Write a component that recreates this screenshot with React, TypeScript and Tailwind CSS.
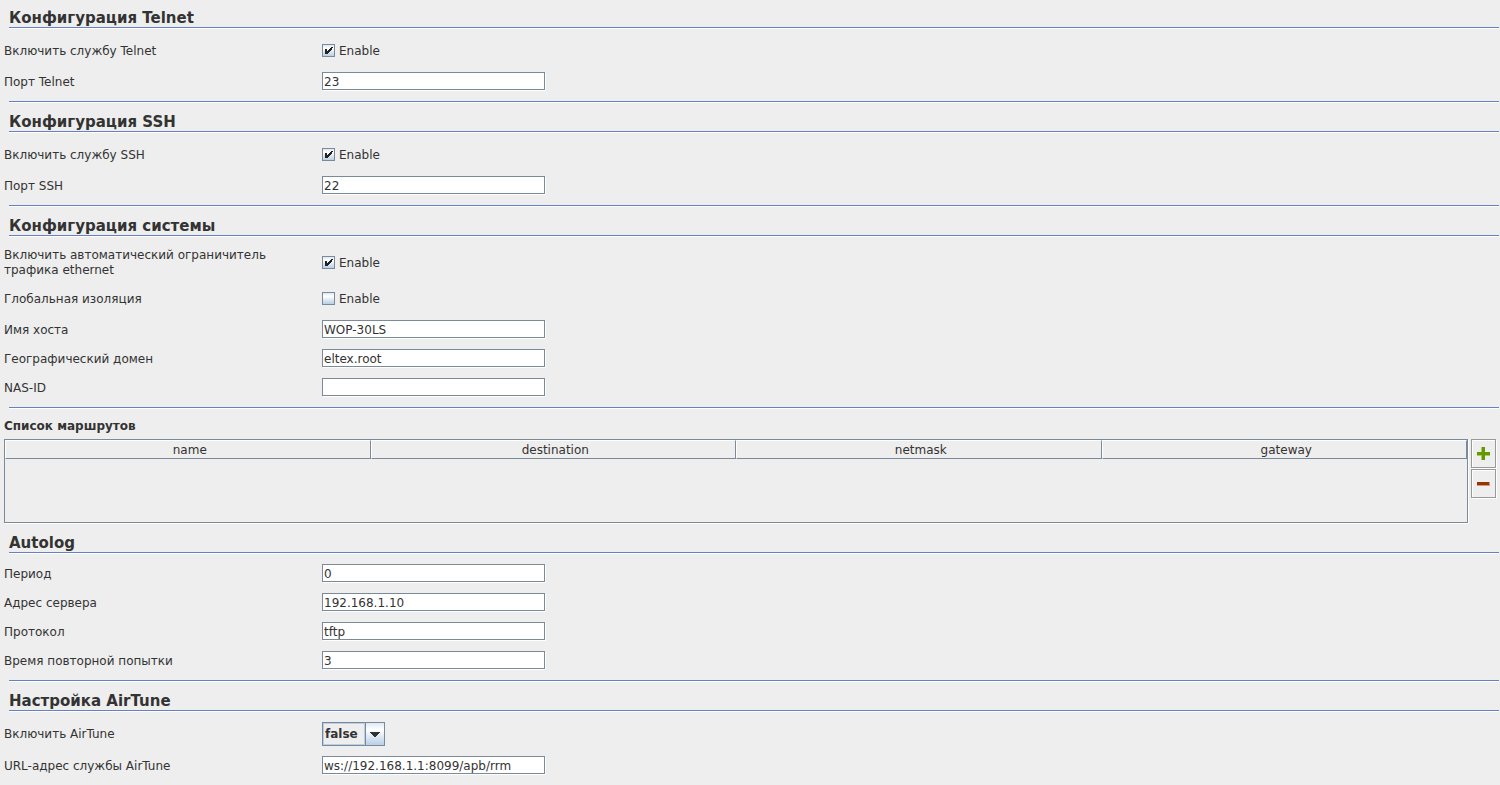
import { useId, useState, type ReactNode } from 'react'

const COLUMNS = ['name', 'destination', 'netmask', 'gateway']

export default function App() {
  return (
    <main className="min-h-screen bg-[#eeeeee] pr-px font-['DejaVu_Sans',sans-serif] text-xs leading-[15px] text-[#333333]">
      <Section title="Конфигурация Telnet">
        <CheckRow label="Включить службу Telnet" checked />
        <TextRow label="Порт Telnet" value="23" />
      </Section>
      <Separator />

      <Section title="Конфигурация SSH">
        <CheckRow label="Включить службу SSH" checked />
        <TextRow label="Порт SSH" value="22" />
      </Section>
      <Separator />

      <Section title="Конфигурация системы">
        <CheckRow label="Включить автоматический ограничитель трафика ethernet" checked />
        <CheckRow label="Глобальная изоляция" />
        <TextRow label="Имя хоста" value="WOP-30LS" />
        <TextRow label="Географический домен" value="eltex.root" />
        <TextRow label="NAS-ID" value="" />
      </Section>
      <Separator />

      <RouteList />

      <Section title="Autolog">
        <TextRow label="Период" value="0" />
        <TextRow label="Адрес сервера" value="192.168.1.10" />
        <TextRow label="Протокол" value="tftp" />
        <TextRow label="Время повторной попытки" value="3" />
      </Section>
      <Separator />

      <Section title="Настройка AirTune">
        <SelectRow label="Включить AirTune" />
        <TextRow label="URL-адрес службы AirTune" value="ws://192.168.1.1:8099/apb/rrm" />
      </Section>
    </main>
  )
}

function Separator() {
  return <hr className="mb-px ml-[9px] h-[2px] border-t border-[#6382bf] bg-white" />
}

function Section({ title, children }: { title: string; children: ReactNode }) {
  return (
    <section>
      <h2 className="ml-[9px] flex h-[27px] items-end text-[15px] leading-[18px] font-bold">{title}</h2>
      <div className="ml-[9px] h-[2px] border-t border-[#6382bf] bg-white" />
      <div className="py-[5px] pl-1">{children}</div>
    </section>
  )
}

function CheckRow({ label, checked = false }: { label: string; checked?: boolean }) {
  const id = useId()
  const [on, setOn] = useState(checked)
  return (
    <div className="flex min-h-[33px] items-center py-1">
      <span id={id} className="w-[318px] shrink-0 pt-[2px] pr-6">{label}</span>
      <label className="flex items-center gap-1">
        <span className="relative size-[13px]">
          <input
            type="checkbox"
            checked={on}
            onChange={e => setOn(e.target.checked)}
            aria-describedby={id}
            className="block size-[13px] appearance-none border border-[#7a8a99] bg-linear-to-b from-[#dde8f3] via-white via-30% to-[#b8cfe5]"
          />
          {on && (
            <svg className="pointer-events-none absolute inset-0" width="13" height="13" shapeRendering="crispEdges">
              <path
                fill="#222222"
                d="M3 5h2v5H3zM5 7h1v3H5zM6 6h1v3H6zM7 5h1v3H7zM8 4h1v3H8zM9 3h1v3H9zM10 3h1v1h-1z"
              />
            </svg>
          )}
        </span>
        <span className="pt-[2px]">Enable</span>
      </label>
    </div>
  )
}

function TextRow({ label, value }: { label: string; value: string }) {
  const id = useId()
  return (
    <div className="flex h-[29px] items-center">
      <label htmlFor={id} className="w-[318px] shrink-0 pt-[2px] pr-6">{label}</label>
      <input
        id={id}
        type="text"
        defaultValue={value}
        className="mb-px h-[18px] w-[223px] border border-[#7a8a99] bg-white px-px pt-[2px] leading-[14px] shadow-[1px_1px_0_#ffffff] outline-none"
      />
    </div>
  )
}

function SelectRow({ label }: { label: string }) {
  const id = useId()
  return (
    <div className="flex h-[34px] items-center">
      <label htmlFor={id} className="w-[318px] shrink-0 pr-6">{label}</label>
      <div className="relative h-6 w-[63px]">
        <select
          id={id}
          defaultValue="false"
          className="h-6 w-full appearance-none border border-[#7a8a99] bg-[#eeeeee] pl-[2px] font-bold outline-none"
        >
          <option>false</option>
          <option>true</option>
        </select>
        <span className="pointer-events-none absolute inset-y-px left-px w-[42px] border border-[#b8cfe5]" />
        <span className="pointer-events-none absolute inset-y-0 right-0 flex w-5 items-center justify-center border border-[#7a8a99] bg-linear-to-b from-[#dde8f3] via-white via-30% to-[#b8cfe5]">
          <svg width="10" height="5" shapeRendering="crispEdges">
            <path fill="#333333" d="M0 0h10v1H0zM1 1h8v1H1zM2 2h6v1H2zM3 3h4v1H3zM4 4h2v1H4z" />
          </svg>
        </span>
      </div>
    </div>
  )
}

function RouteList() {
  return (
    <section className="mb-px pl-1">
      <h3 className="flex h-[29px] items-center pt-1 leading-[15px] font-bold">Список маршрутов</h3>
      <div className="flex gap-[3px] pr-[3px]">
        <div className="mb-px h-[84px] flex-1 border border-[#7a8a99] shadow-[1px_1px_0_#ffffff]">
          <table className="w-full table-fixed border-separate border-spacing-0">
            <thead>
              <tr>
                {COLUMNS.map(name => (
                  <th
                    key={name}
                    className="h-[19px] border-t border-r border-b border-l border-t-white border-r-[#7a8a99] border-b-[#7a8a99] border-l-white p-0 pt-[2px] pl-1 font-normal"
                  >
                    {name}
                  </th>
                ))}
              </tr>
            </thead>
            <tbody />
          </table>
        </div>
        <div className="flex flex-col gap-px">
          <ToolButton label="Добавить">
            <path fill="#a8c86a" d="M4 0h4v13H4zM0 5h13v4H0z" />
            <path fill="#669900" d="M5 0h3v13H5zM0 5h13v3H0z" />
          </ToolButton>
          <ToolButton label="Удалить">
            <path fill="#cc9980" d="M0 5h13v4H0z" />
            <path fill="#993300" d="M0 5h12v3H0z" />
          </ToolButton>
        </div>
      </div>
    </section>
  )
}

function ToolButton({ label, children }: { label: string; children: ReactNode }) {
  return (
    <button
      type="button"
      aria-label={label}
      className="flex h-[29px] w-[25px] items-center justify-center border border-[#999999] shadow-[1px_1px_0_#ffffff,inset_1px_1px_0_#ffffff]"
    >
      <svg width="13" height="13" shapeRendering="crispEdges">{children}</svg>
    </button>
  )
}
